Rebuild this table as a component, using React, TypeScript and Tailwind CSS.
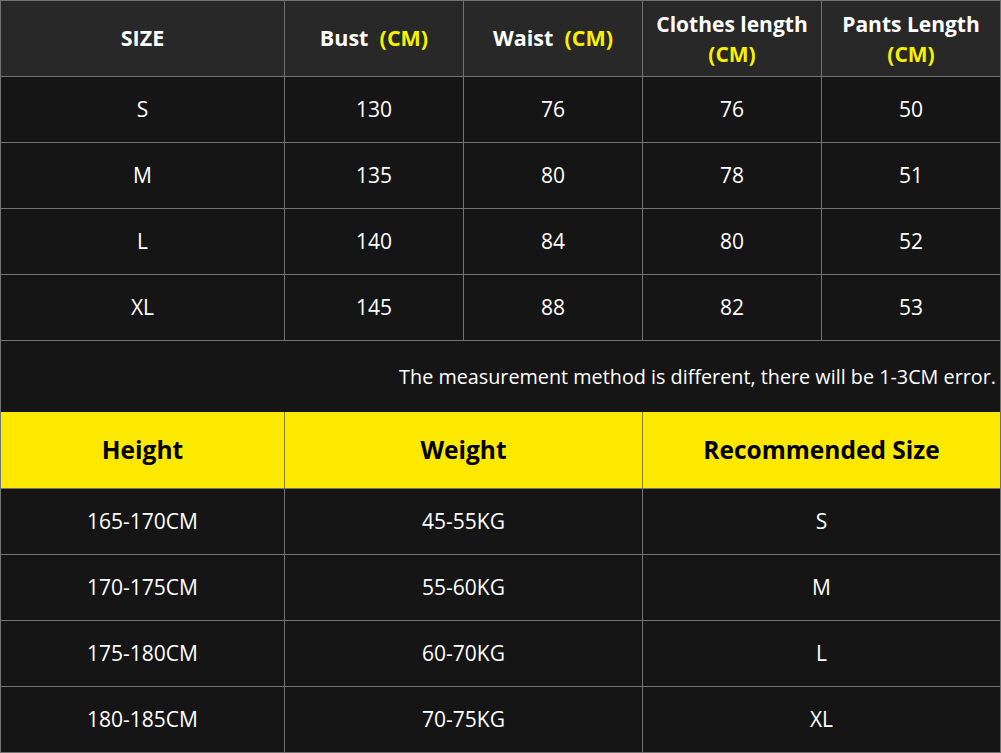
import React from "react";

const font = { fontFamily: '"Open Sans", "Noto Sans", sans-serif' };

const sizes = [
  ["S", "130", "76", "76", "50"],
  ["M", "135", "80", "78", "51"],
  ["L", "140", "84", "80", "52"],
  ["XL", "145", "88", "82", "53"],
];

const recs = [
  ["165-170CM", "45-55KG", "S"],
  ["170-175CM", "55-60KG", "M"],
  ["175-180CM", "60-70KG", "L"],
  ["180-185CM", "70-75KG", "XL"],
];

function CM() {
  return <span className="text-[#f7f000]">(CM)</span>;
}

export default function App() {
  return (
    <div
      className="w-[1001px] h-[753px] bg-[#727272] p-px flex flex-col overflow-hidden"
      style={font}
    >
      <div className="grid grid-cols-[283px_178px_178px_178px_178px] gap-px">
        <div className="h-[75px] bg-[#282828] flex items-center justify-center text-white font-bold text-[21.5px]">
          SIZE
        </div>
        <div className="h-[75px] bg-[#282828] flex items-center justify-center text-white font-bold text-[21.5px] whitespace-pre">
          Bust  <CM />
        </div>
        <div className="h-[75px] bg-[#282828] flex items-center justify-center text-white font-bold text-[21.5px] whitespace-pre">
          Waist  <CM />
        </div>
        <div className="h-[75px] bg-[#282828] flex flex-col items-center justify-center text-white font-bold text-[21px] leading-[30px]">
          <span>Clothes length</span>
          <CM />
        </div>
        <div className="h-[75px] bg-[#282828] flex flex-col items-center justify-center text-white font-bold text-[21px] leading-[30px]">
          <span>Pants Length</span>
          <CM />
        </div>
        {sizes.map((row) =>
          row.map((c, i) => (
            <div
              key={row[0] + i}
              className="h-[65px] bg-[#151515] flex items-center justify-center text-white text-[21px]"
            >
              {c}
            </div>
          ))
        )}
      </div>
      <div className="mt-px h-[71px] bg-[#151515] flex items-center justify-end pr-[4px] text-white text-[19.8px]">
        The measurement method is different, there will be 1-3CM error.
      </div>
      <div className="grid grid-cols-[283px_357px_357px] gap-px bg-[#8a8000]">
        <div className="h-[76px] bg-[#fde900] flex items-center justify-center text-black font-bold text-[24.5px]">
          Height
        </div>
        <div className="h-[76px] bg-[#fde900] flex items-center justify-center text-black font-bold text-[24.5px]">
          Weight
        </div>
        <div className="h-[76px] bg-[#fde900] flex items-center justify-center text-black font-bold text-[24.5px]">
          Recommended Size
        </div>
      </div>
      <div className="mt-px grid grid-cols-[283px_357px_357px] gap-px">
        {recs.map((row) =>
          row.map((c, i) => (
            <div
              key={row[0] + i}
              className="h-[65px] bg-[#151515] flex items-center justify-center text-white text-[21px]"
            >
              {c}
            </div>
          ))
        )}
      </div>
    </div>
  );
}
